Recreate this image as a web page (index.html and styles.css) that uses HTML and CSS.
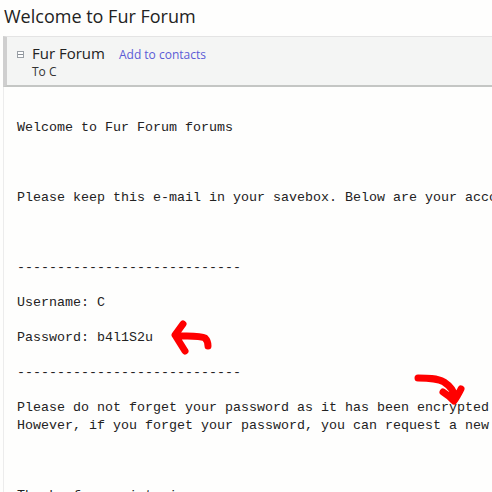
FILE: index.html
```html
<!DOCTYPE html>
<html lang="en">
<head>
    <meta charset="UTF-8">
    <title>Welcome to Fur Forum</title>
    <link rel="stylesheet" href="styles.css">
</head>
<body>

	<h1 class="subject">Welcome to Fur Forum</h1>

	<div class="msg-head">
	    <span class="check"></span>
	    <div class="sender">
	        <div class="from">
	            <span class="name">Fur Forum</span>
	            <a class="add" href="#">Add to contacts</a>
	        </div>
	        <div class="to">To C</div>
	    </div>
	</div>

	<div class="msg-body">
<pre>Welcome to Fur Forum forums



Please keep this e-mail in your savebox. Below are your account details, so you can login



----------------------------

Username: C

Password: b4l1S2u

----------------------------

Please do not forget your password as it has been encrypted in our database and we cannot retrieve it for you.
However, if you forget your password, you can request a new one which will be activated in the same way as this account.



Thanks for registering.</pre>

	    <!-- marker arrows drawn over the mail -->
	    <svg class="arrow arrow-left" width="50" height="44" viewBox="0 0 50 44">
	        <path d="M14 4 L6 15 L16 31 M7 16 C18 16 31 15 36 18 C38 20 39 22 39 26"/>
	    </svg>
	    <svg class="arrow arrow-down" width="54" height="40" viewBox="0 0 54 40">
	        <path d="M5 9 C14 9 24 9 31 13 C37 17 41 22 42 28 M30 23 C35 26 38 29 41 32 C44 28 46 24 48 20"/>
	    </svg>
	</div>

</body>
</html>
```

FILE: styles.css
```css
body {
    margin: 0;
    overflow: hidden;
    background-color: #fefefd;
    font-family: "Open Sans", "Noto Sans", sans-serif;
}
.subject {
    margin: 0;
    padding: 2px 0 0 4px;
    height: 34px;
    font-size: 18px;
    font-weight: normal;
    color: #222;
    line-height: 28px;
}
.msg-head {
    display: flex;
    align-items: flex-start;
    margin-left: 3px;
    padding: 7px 0 0 10px;
    height: 41px;
    border-top: 1px solid #e4e4e4;
    border-left: 4px solid #cfcfcf;
    border-bottom: 2px solid #c4c6c4;
    background-color: #f4f5f4;
}
.check {
    display: block;
    margin: 7px 8px 0 0;
    width: 5px;
    height: 5px;
    border: 1px solid #9aa0a6;
    background: linear-gradient(#fff 2px, #8a9096 2px, #8a9096 3px, #fff 3px);
}
.from {
    display: flex;
    align-items: baseline;
    line-height: 18px;
}
.name {
    font-size: 15px;
    color: #222;
}
.add {
    margin-left: 14px;
    font-size: 12px;
    color: #5b5bd6;
    text-decoration: none;
}
.to {
    font-size: 12px;
    color: #333;
    line-height: 16px;
}
.msg-body {
    position: relative;
    margin-left: 3px;
    padding: 32px 0 0 13px;
    height: 400px;
    border-left: 1px solid #ececec;
}
pre {
    margin: 0;
    font-family: "Liberation Mono", "Courier New", monospace;
    font-size: 13.33px;
    line-height: 17.5px;
    color: #222;
}
.arrow {
    position: absolute;
    fill: none;
    stroke: #ff0000;
    stroke-width: 7;
    stroke-linecap: round;
    stroke-linejoin: round;
}
.arrow-left {
    left: 165px;
    top: 233px;
}
.arrow-down {
    left: 409px;
    top: 282px;
}
```
